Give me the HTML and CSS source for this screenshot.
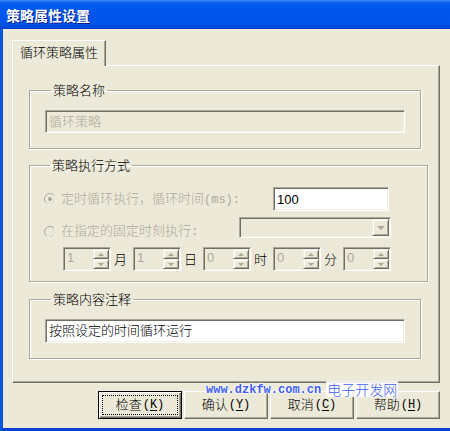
FILE: index.html
```html
<!DOCTYPE html>
<html>
<head>
<meta charset="utf-8">
<link rel="stylesheet" href="styles.css">
</head>
<body>
<div class="window">
  <div class="titlebar"><span class="title">策略属性设置</span></div>
  <div class="client">
    <div class="tabs"><div class="tab">循环策略属性</div></div>
    <div class="panel">
      <fieldset class="group g1">
        <legend>策略名称</legend>
        <div class="edit disabled wide">循环策略</div>
      </fieldset>
      <fieldset class="group g2">
        <legend>策略执行方式</legend>
        <div class="row r1">
          <div class="opt">
            <svg class="radio" width="12" height="12" viewBox="0 0 12 12"><circle cx="6" cy="6" r="5.5" fill="#ece9d8" stroke="#aca899"/><path d="M10.2 2.3 A5.5 5.5 0 0 1 2.3 10.2" fill="none" stroke="#ffffff"/><circle cx="6" cy="6" r="2" fill="#aca899"/></svg>
            <span class="optlabel">定时循环执行，循环时间<span class="mono">(ms):</span></span>
          </div>
          <div class="edit period">100</div>
        </div>
        <div class="row r2">
          <div class="opt opt2">
            <svg class="radio" width="12" height="12" viewBox="0 0 12 12"><circle cx="6" cy="6" r="5.5" fill="#ece9d8" stroke="#aca899"/><path d="M10.2 2.3 A5.5 5.5 0 0 1 2.3 10.2" fill="none" stroke="#ffffff"/></svg>
            <span class="optlabel">在指定的固定时刻执行<span class="mono">:</span></span>
          </div>
          <div class="combo"><div class="dropbtn"><i class="tri-down"></i></div></div>
        </div>
        <div class="row r3">
          <div class="unit"><div class="spin"><span class="val">1</span><div class="arrows"><span class="sbtn"><i class="tri-up"></i></span><span class="sbtn"><i class="tri-dn"></i></span></div></div><span class="ulabel">月</span></div>
          <div class="unit"><div class="spin"><span class="val">1</span><div class="arrows"><span class="sbtn"><i class="tri-up"></i></span><span class="sbtn"><i class="tri-dn"></i></span></div></div><span class="ulabel">日</span></div>
          <div class="unit"><div class="spin"><span class="val">0</span><div class="arrows"><span class="sbtn"><i class="tri-up"></i></span><span class="sbtn"><i class="tri-dn"></i></span></div></div><span class="ulabel">时</span></div>
          <div class="unit"><div class="spin"><span class="val">0</span><div class="arrows"><span class="sbtn"><i class="tri-up"></i></span><span class="sbtn"><i class="tri-dn"></i></span></div></div><span class="ulabel">分</span></div>
          <div class="unit"><div class="spin"><span class="val">0</span><div class="arrows"><span class="sbtn"><i class="tri-up"></i></span><span class="sbtn"><i class="tri-dn"></i></span></div></div></div>
        </div>
      </fieldset>
      <fieldset class="group g3">
        <legend>策略内容注释</legend>
        <div class="edit wide">按照设定的时间循环运行</div>
      </fieldset>
    </div>
    <div class="buttons">
      <div class="btn default"><span class="focus">检查<span class="mono">(<u>K</u>)</span></span></div>
      <div class="btn"><span class="focus">确认<span class="mono">(<u>Y</u>)</span></span></div>
      <div class="btn"><span class="focus">取消<span class="mono">(<u>C</u>)</span></span></div>
      <div class="btn"><span class="focus">帮助<span class="mono">(<u>H</u>)</span></span></div>
    </div>
  </div>
  <div class="watermark"><span class="wm-url">www.dzkfw.com.cn</span><span class="wm-cn">电子开发网</span></div>
</div>
</body>
</html>
```

FILE: styles.css
```css
* { box-sizing: border-box; margin: 0; padding: 0; }
html, body { width: 450px; height: 431px; overflow: hidden; }
body {
  font-family: "Liberation Sans", "Noto Sans CJK SC", sans-serif;
  font-size: 13px;
  font-weight: 300;
  color: #000;
  background: #ece9d8;
}
.mono { font-family: "Liberation Mono", monospace; font-size: 12px; font-weight: normal; }
.window {
  position: relative;
  width: 450px;
  height: 431px;
  background: #ece9d8;
  border-left: 3px solid #0b55e4;
  border-bottom: 3px solid #0841d0;
  display: flex;
  flex-direction: column;
}
.titlebar {
  height: 29px;
  flex: none;
  margin-left: -3px;
  padding-left: 6px;
  display: flex;
  align-items: center;
  background: linear-gradient(to bottom, #3d8cf2 0px, #2a7af5 1px, #0a5ff0 3px, #0058ee 6px, #0056ec 16px, #0053e8 24px, #0046d6 28px, #003fc8 29px);
}
.title {
  color: #fff;
  font-family: "Noto Sans CJK SC", sans-serif;
  font-weight: bold;
  font-size: 14px;
  line-height: 16px;
  margin-top: 1px;
  text-shadow: 1px 1px 0 #0a1e8a;
}
.client {
  flex: 1;
  padding: 11px 10px 0 9px;
  display: flex;
  flex-direction: column;
}
.tabs { height: 25px; display: flex; align-items: flex-end; }
.tab {
  position: relative;
  z-index: 1;
  width: 94px;
  height: 26px;
  margin-bottom: -1px;
  background: #ece9d8;
  border-top: 1px solid #fff;
  border-left: 1px solid #fff;
  border-right: 1px solid #716f64;
  box-shadow: inset -1px 0 0 #aca899;
  padding: 4px 0 0 7px;
  line-height: 16px;
}
.panel {
  height: 318px;
  border-top: 1px solid #fff;
  border-left: 1px solid #fff;
  border-right: 1px solid #716f64;
  border-bottom: 1px solid #716f64;
  box-shadow: inset -1px -1px 0 #aca899;
  padding: 16px 0 0 16px;
}
.group {
  width: 392px;
  border: 1px solid #aca899;
  box-shadow: 1px 1px 0 #fff, inset 1px 1px 0 #fff;
  padding: 12px 15px 15px 15px;
}
.group legend {
  margin-left: 6px;
  padding: 0 2px;
  line-height: 16px;
  font-family: "Noto Sans CJK SC", sans-serif;
}
.g2 { margin-top: 8px; padding: 14px 14px 10px 14px; }
.g3 { margin-top: 9px; padding-bottom: 15px; }

.edit {
  height: 23px;
  background: #fff;
  border-top: 1px solid #aca899;
  border-left: 1px solid #aca899;
  border-bottom: 1px solid #fff;
  border-right: 1px solid #fff;
  box-shadow: inset 1px 1px 0 #716f64, inset -1px -1px 0 #f1efe2;
  padding: 2px 0 0 3px;
  line-height: 17px;
  white-space: nowrap;
}
.edit.disabled { background: #ece9d8; color: #aca899; }
.wide { width: 360px; }
.g3 .edit { height: 24px; }

.row { display: flex; }
.r1 { height: 24px; align-items: center; }
.opt { width: 229px; display: flex; align-items: center; color: #aca899; }
.radio { flex: none; margin-right: 5px; }
.optlabel { line-height: 16px; white-space: nowrap; }
.period { width: 116px; height: 24px; padding-top: 3px; font-weight: normal; }
.r2 { margin-top: 6px; align-items: flex-start; }
.opt2 { width: 195px; margin-top: 6px; }
.combo {
  width: 152px;
  height: 21px;
  background: #ece9d8;
  border-top: 1px solid #aca899;
  border-left: 1px solid #aca899;
  border-bottom: 1px solid #fff;
  border-right: 1px solid #fff;
  box-shadow: inset 1px 1px 0 #716f64, inset -1px -1px 0 #f1efe2;
  padding: 1px 1px 1px 0;
  display: flex;
  justify-content: flex-end;
}
.dropbtn {
  width: 17px;
  height: 17px;
  border-top: 1px solid #f1efe2;
  border-left: 1px solid #f1efe2;
  border-right: 1px solid #716f64;
  border-bottom: 1px solid #716f64;
  box-shadow: inset 1px 1px 0 #fff, inset -1px -1px 0 #aca899;
  display: flex;
  align-items: center;
  justify-content: center;
}
.tri-down {
  width: 0; height: 0;
  border-left: 4px solid transparent;
  border-right: 4px solid transparent;
  border-top: 4px solid #aca899;
  margin-top: 1px;
}
.r3 { margin-top: 7px; padding-left: 19px; }
.unit { width: 70px; display: flex; align-items: center; }
.spin {
  width: 48px;
  height: 24px;
  flex: none;
  background: #ece9d8;
  border-top: 1px solid #aca899;
  border-left: 1px solid #aca899;
  border-bottom: 1px solid #fff;
  border-right: 1px solid #fff;
  box-shadow: inset 1px 1px 0 #716f64, inset -1px -1px 0 #f1efe2;
  padding: 1px 1px 1px 2px;
  display: flex;
}
.val { flex: 1; color: #aca899; line-height: 18px; padding-left: 1px; }
.arrows { width: 16px; display: flex; flex-direction: column; }
.sbtn {
  flex: 1;
  border-top: 1px solid #f1efe2;
  border-left: 1px solid #f1efe2;
  border-right: 1px solid #716f64;
  border-bottom: 1px solid #716f64;
  box-shadow: inset 1px 1px 0 #fff, inset -1px -1px 0 #aca899;
  display: flex;
  align-items: center;
  justify-content: center;
}
.tri-up {
  width: 0; height: 0;
  border-left: 3px solid transparent;
  border-right: 3px solid transparent;
  border-bottom: 3px solid #aca899;
}
.tri-dn {
  width: 0; height: 0;
  border-left: 3px solid transparent;
  border-right: 3px solid transparent;
  border-top: 3px solid #aca899;
}
.ulabel { padding-left: 3px; font-family: "Noto Sans CJK SC", sans-serif; line-height: 16px; }

.buttons {
  margin-top: 8px;
  display: flex;
  justify-content: flex-end;
  gap: 2px;
}
.btn {
  width: 84px;
  height: 28px;
  border-top: 1px solid #fff;
  border-left: 1px solid #fff;
  border-right: 1px solid #716f64;
  border-bottom: 1px solid #716f64;
  box-shadow: inset -1px -1px 0 #aca899;
  display: flex;
  align-items: center;
  justify-content: center;
  padding: 3px;
}
.btn .focus {
  flex: 1;
  align-self: stretch;
  display: flex;
  align-items: center;
  justify-content: center;
  line-height: 16px;
  border: 1px dotted transparent;
}
.btn .mono { margin-left: 1px; }
.btn.default {
  border: 1px solid #000;
  box-shadow: inset 1px 1px 0 #fff, inset -1px -1px 0 #716f64, inset -2px -2px 0 #aca899;
}
.btn.default .focus { border-color: #000; }
.btn u { text-decoration: underline; text-underline-offset: 2px; }

.watermark {
  position: absolute;
  left: 203px;
  top: 379px;
  display: flex;
  align-items: center;
  color: #3f5cf4;
  text-shadow: 0 0 2px #fff, 0 0 2px #fff, 0 0 3px #fff;
}
.wm-url {
  font-family: "Liberation Mono", monospace;
  font-size: 12px;
  font-weight: bold;
  line-height: 16px;
  margin-top: 3px;
}
.wm-cn {
  margin-left: 5px;
  font-family: "Noto Sans CJK SC", sans-serif;
  font-size: 14px;
  font-weight: 300;
  line-height: 16px;
  padding: 0 1px;
  background: rgba(255, 255, 255, 0.85);
}
```
